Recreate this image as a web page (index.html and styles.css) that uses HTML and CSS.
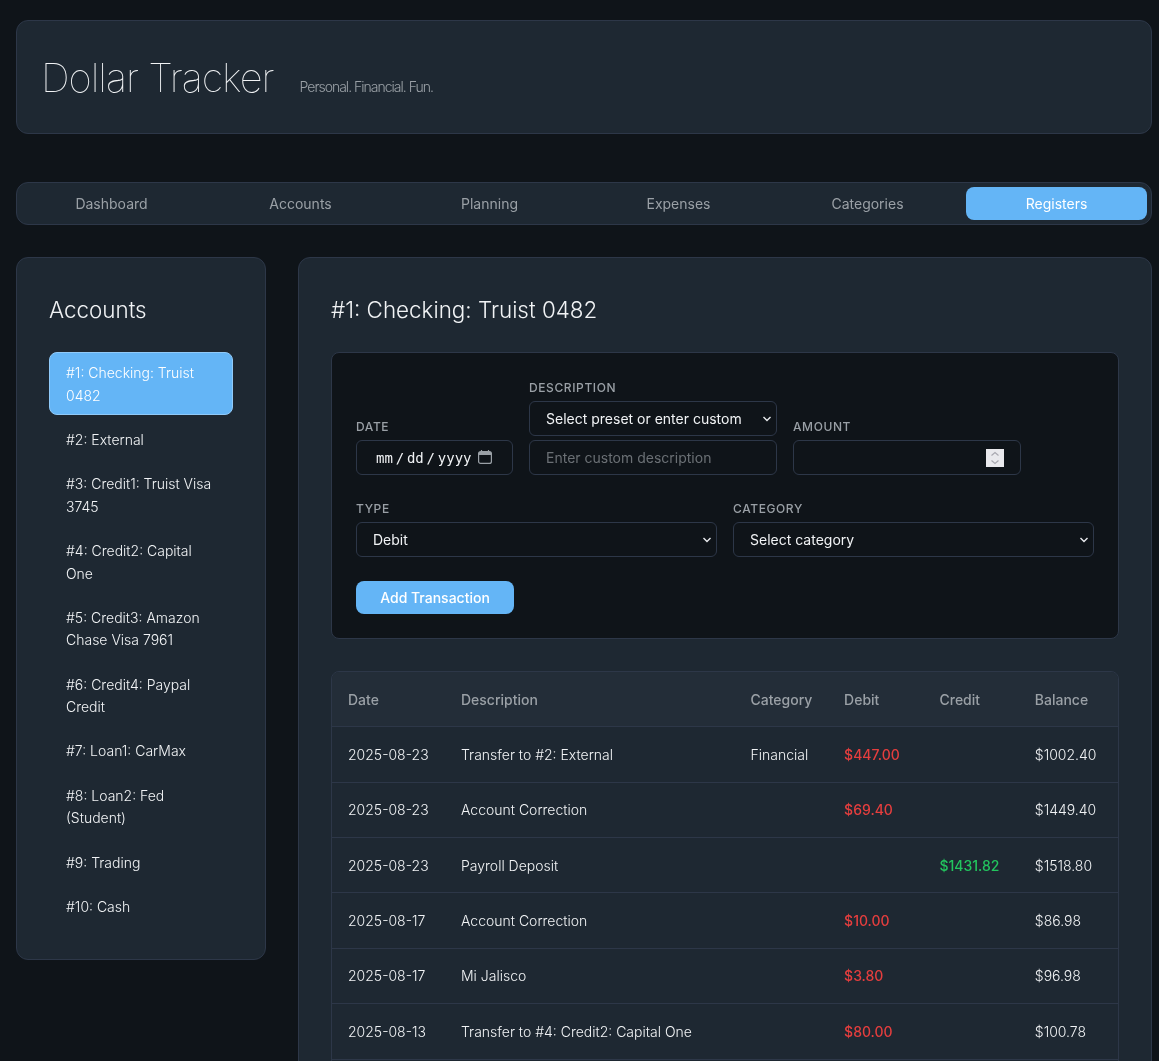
FILE: index.html
```html
<!DOCTYPE html>
<html lang="en">
<head>
  <meta charset="UTF-8">
  <title>Dollar Tracker</title>
  <link rel="stylesheet" href="styles.css">
</head>
<body>
  <div class="app">
    <header class="site-header">
      <h1>Dollar Tracker</h1>
      <span class="tagline">Personal. Financial. Fun.</span>
    </header>

    <nav class="tabs">
      <a class="tab" href="#">Dashboard</a>
      <a class="tab" href="#">Accounts</a>
      <a class="tab" href="#">Planning</a>
      <a class="tab" href="#">Expenses</a>
      <a class="tab" href="#">Categories</a>
      <a class="tab active" href="#">Registers</a>
    </nav>

    <div class="layout">
      <aside class="sidebar">
        <h3>Accounts</h3>
        <ul class="account-list">
          <li class="account active">#1: Checking: Truist 0482</li>
          <li class="account">#2: External</li>
          <li class="account">#3: Credit1: Truist Visa 3745</li>
          <li class="account">#4: Credit2: Capital One</li>
          <li class="account">#5: Credit3: Amazon Chase Visa 7961</li>
          <li class="account">#6: Credit4: Paypal Credit</li>
          <li class="account">#7: Loan1: CarMax</li>
          <li class="account">#8: Loan2: Fed (Student)</li>
          <li class="account">#9: Trading</li>
          <li class="account">#10: Cash</li>
        </ul>
      </aside>

      <main class="register">
        <h3>#1: Checking: Truist 0482</h3>

        <form class="tx-form">
          <div class="form-row">
            <div class="field">
              <label for="date">Date</label>
              <input id="date" type="date">
            </div>
            <div class="field field-desc">
              <label for="preset">Description</label>
              <select id="preset">
                <option>Select preset or enter custom</option>
              </select>
              <input type="text" placeholder="Enter custom description">
            </div>
            <div class="field field-amount">
              <label for="amount">Amount</label>
              <input id="amount" type="number">
            </div>
          </div>
          <div class="form-row">
            <div class="field grow">
              <label for="type">Type</label>
              <select id="type">
                <option>Debit</option>
                <option>Credit</option>
              </select>
            </div>
            <div class="field grow">
              <label for="category">Category</label>
              <select id="category">
                <option>Select category</option>
              </select>
            </div>
          </div>
          <button type="button" class="btn-add">Add Transaction</button>
        </form>

        <div class="table-wrap">
          <table>
            <thead>
              <tr>
                <th class="col-date">Date</th>
                <th class="col-desc">Description</th>
                <th class="col-cat">Category</th>
                <th class="col-debit">Debit</th>
                <th class="col-credit">Credit</th>
                <th>Balance</th>
              </tr>
            </thead>
            <tbody>
              <tr>
                <td>2025-08-23</td>
                <td>Transfer to #2: External</td>
                <td>Financial</td>
                <td class="debit">$447.00</td>
                <td></td>
                <td>$1002.40</td>
              </tr>
              <tr>
                <td>2025-08-23</td>
                <td>Account Correction</td>
                <td></td>
                <td class="debit">$69.40</td>
                <td></td>
                <td>$1449.40</td>
              </tr>
              <tr>
                <td>2025-08-23</td>
                <td>Payroll Deposit</td>
                <td></td>
                <td></td>
                <td class="credit">$1431.82</td>
                <td>$1518.80</td>
              </tr>
              <tr>
                <td>2025-08-17</td>
                <td>Account Correction</td>
                <td></td>
                <td class="debit">$10.00</td>
                <td></td>
                <td>$86.98</td>
              </tr>
              <tr>
                <td>2025-08-17</td>
                <td>Mi Jalisco</td>
                <td></td>
                <td class="debit">$3.80</td>
                <td></td>
                <td>$96.98</td>
              </tr>
              <tr>
                <td>2025-08-13</td>
                <td>Transfer to #4: Credit2: Capital One</td>
                <td></td>
                <td class="debit">$80.00</td>
                <td></td>
                <td>$100.78</td>
              </tr>
            </tbody>
          </table>
        </div>
      </main>
    </div>
  </div>
</body>
</html>
```

FILE: styles.css
```css
* {
  box-sizing: border-box;
}

html, body {
  height: 100vh;
  overflow: hidden;
}

body {
  margin: 0;
  background-color: #0f1419;
  color: #f1f3f5;
  font-family: 'Inter', sans-serif;
  font-size: 14px;
  font-weight: 300;
  line-height: 1.6;
}

.app {
  width: 1136px;
  margin: 20px 0 0 16px;
  will-change: transform;
}

.site-header {
  display: flex;
  align-items: baseline;
  gap: 26px;
  padding: 33px 24px 31px;
  background-color: #1e2832;
  border: 1px solid #2d3748;
  border-radius: 12px;
  margin-bottom: 48px;
}

.site-header h1 {
  margin: 0;
  font-size: 40px;
  font-weight: 100;
  line-height: 48px;
  letter-spacing: -1px;
  color: #f1f3f5;
}

.tagline {
  font-weight: 300;
  color: #9aa0a6;
  letter-spacing: -1px;
}

.tabs {
  display: flex;
  gap: 8px;
  padding: 4px;
  background-color: #1e2832;
  border: 1px solid #2d3748;
  border-radius: 12px;
  margin-bottom: 32px;
}

.tab {
  flex: 1;
  padding: 6px 5px 4.6px;
  text-align: center;
  font-weight: 400;
  color: #9aa0a6;
  text-decoration: none;
  border-radius: 8px;
}

.tab.active {
  background-color: #64b5f6;
  color: #fff;
}

.layout {
  display: flex;
  align-items: flex-start;
  gap: 32px;
}

.sidebar {
  flex: 0 0 250px;
  padding: 32px 32px 32.5px;
  background-color: #1e2832;
  border: 1px solid #2d3748;
  border-radius: 12px;
}

.sidebar h3, .register h3 {
  margin: 0 0 22.4px;
  font-size: 22.4px;
  font-weight: 300;
  line-height: 40px;
  color: #f1f3f5;
}

.account-list {
  list-style: none;
  margin: 0;
  padding: 0;
}

.account {
  padding: 8.9px 16px 7.1px;
  border: 1px solid transparent;
  border-radius: 8px;
  margin-bottom: 4px;
}

.account:last-child {
  margin-bottom: 0;
}

.account.active {
  background-color: #64b5f6;
  border-color: #90caf9;
  color: #fff;
}

.register {
  flex: 1;
  min-width: 0;
  padding: 32px;
  background-color: #1e2832;
  border: 1px solid #2d3748;
  border-radius: 12px;
}

.tx-form {
  padding: 25px 24px 24px;
  background-color: #0f1419;
  border: 1px solid #2d3748;
  border-radius: 8px;
  margin-bottom: 32px;
}

.form-row {
  display: flex;
  align-items: flex-end;
  gap: 16px;
  margin-bottom: 24px;
}

.field {
  display: flex;
  flex-direction: column;
}

.field.grow {
  flex: 1;
}

.field-desc {
  width: 248px;
}

.field-amount {
  width: 228px;
}

.field label {
  font-size: 12px;
  font-weight: 500;
  line-height: 19px;
  letter-spacing: 0.6px;
  text-transform: uppercase;
  color: #9aa0a6;
  margin-bottom: 4px;
}

input, select {
  height: 35px;
  padding: 6px 16px;
  background-color: #0f1419;
  border: 1px solid #2d3748;
  border-radius: 6px;
  color: #f1f3f5;
  font-family: 'Inter', sans-serif;
  font-size: 14px;
  font-weight: 400;
}

select {
  appearance: none;
  background-image: url("data:image/svg+xml,%3Csvg xmlns='http://www.w3.org/2000/svg' width='10' height='8'%3E%3Cpath d='M1.5 2 5 5.5 8.5 2' fill='none' stroke='%23e8eaed' stroke-width='1.4'/%3E%3C/svg%3E");
  background-repeat: no-repeat;
  background-position: right 4px center;
}

.field-desc select {
  margin-bottom: 4px;
}

input[type="date"] {
  width: 157px;
  font-family: 'DejaVu Sans Mono', monospace;
}

input::placeholder {
  color: #6b7075;
}

input::-webkit-datetime-edit-fields-wrapper {
  margin-left: 3px;
}

input::-webkit-datetime-edit-month-field,
input::-webkit-datetime-edit-day-field,
input::-webkit-datetime-edit-year-field {
  padding: 0;
}

input::-webkit-datetime-edit-text {
  padding: 0 2.8px;
}

input[type="date"]::-webkit-calendar-picker-indicator {
  width: 16px;
  height: 16px;
  padding: 0;
  margin: 0 3px 0 0;
  background-image: url("data:image/svg+xml,%3Csvg xmlns='http://www.w3.org/2000/svg' width='16' height='16'%3E%3Crect x='1.6' y='1.6' width='12.8' height='11.8' rx='2' fill='none' stroke='%239aa0a6' stroke-width='1.2'/%3E%3Cpath d='M2 2h12v3H2z' fill='%239aa0a6'/%3E%3Cpath d='M4.500 0v2M11.500 0v2' stroke='%239aa0a6' stroke-width='1.2'/%3E%3C/svg%3E");
}

input[type="number"]::-webkit-inner-spin-button {
  appearance: none;
  opacity: 1;
  width: 18px;
  height: 18px;
  background: #e9e9ed url("data:image/svg+xml,%3Csvg xmlns='http://www.w3.org/2000/svg' width='18' height='18'%3E%3Cpath d='M5.5 6.5 9 3.5l3.5 3M5.5 11.500 9 14.500l3.500-3' fill='none' stroke='%23a8a8b0' stroke-width='1.200'/%3E%3C/svg%3E") no-repeat center;
}

.btn-add {
  height: 33px;
  width: 158px;
  padding: 0;
  background-color: #64b5f6;
  border: none;
  border-radius: 8px;
  color: #fff;
  font-family: 'Inter', sans-serif;
  font-size: 14px;
  font-weight: 500;
}

.table-wrap {
  min-height: 460px;
  border: 1px solid #2d3748;
  border-radius: 8px;
  overflow: hidden;
}

table {
  width: 100%;
  border-collapse: collapse;
  table-layout: fixed;
}

th, td {
  padding: 16.4px 16px 15.6px;
  text-align: left;
  white-space: nowrap;
  border-bottom: 1px solid #2d3748;
}

th {
  padding: 17px 16px 14.6px;
  font-weight: 500;
  color: #9aa0a6;
  background-color: #232d38;
}

.col-date { width: 113px; }
.col-desc { width: 289.5px; }
.col-cat { width: 93.6px; }
.col-debit { width: 95.4px; }
.col-credit { width: 95.3px; }

.debit {
  color: #e53e3e;
  font-weight: 500;
}

.credit {
  color: #22c55e;
  font-weight: 500;
}
```
